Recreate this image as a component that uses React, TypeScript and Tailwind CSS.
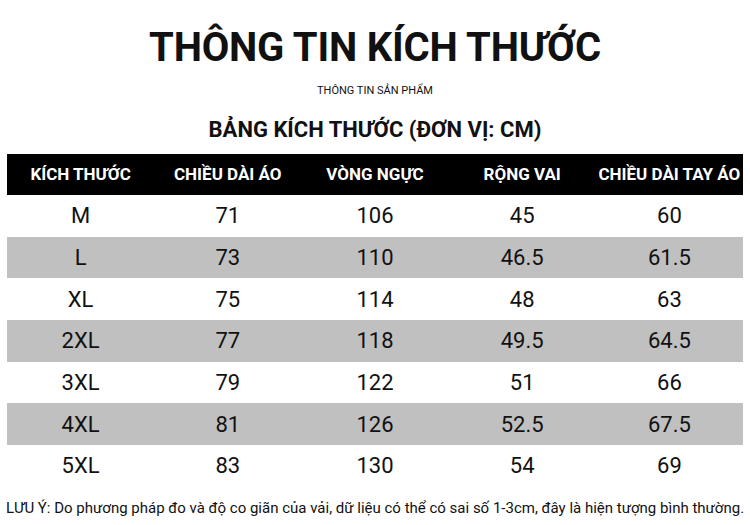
const headers = ["KÍCH THƯỚC", "CHIỀU DÀI ÁO", "VÒNG NGỰC", "RỘNG VAI", "CHIỀU DÀI TAY ÁO"];

const rows = [
  ["M", "71", "106", "45", "60"],
  ["L", "73", "110", "46.5", "61.5"],
  ["XL", "75", "114", "48", "63"],
  ["2XL", "77", "118", "49.5", "64.5"],
  ["3XL", "79", "122", "51", "66"],
  ["4XL", "81", "126", "52.5", "67.5"],
  ["5XL", "83", "130", "54", "69"],
];

export default function App() {
  return (
    <div className="w-[750px] h-[525px] bg-white text-[#111] font-['Roboto',sans-serif] flex flex-col items-center overflow-hidden">
      <h1 className="mt-[22px] text-[40px] leading-[52px] font-bold tracking-[-0.2px]">THÔNG TIN KÍCH THƯỚC</h1>
      <div className="mt-[10px] text-[11px] leading-[14px]">THÔNG TIN SẢN PHẨM</div>
      <h2 className="mt-[18px] text-[22px] leading-[28px] font-bold">BẢNG KÍCH THƯỚC (ĐƠN VỊ: CM)</h2>

      <div className="mt-[10px] w-[736px]">
        <div className="grid grid-cols-5 h-[41px] bg-black text-white text-[17px] font-bold items-center">
          {headers.map((h) => (
            <div key={h} className="text-center">{h}</div>
          ))}
        </div>
        {rows.map((r, i) => (
          <div
            key={r[0]}
            className={`grid grid-cols-5 h-[41.7px] items-center text-[22px] ${i % 2 === 1 ? "bg-[#c0c0c0]" : "bg-white"}`}
          >
            {r.map((c, j) => (
              <div key={j} className="text-center">{c}</div>
            ))}
          </div>
        ))}
      </div>

      <p className="mt-[12px] text-[15px] leading-[18px] whitespace-nowrap">
        LƯU Ý: Do phương pháp đo và độ co giãn của vải, dữ liệu có thể có sai số 1-3cm, đây là hiện tượng bình thường.
      </p>
    </div>
  );
}
